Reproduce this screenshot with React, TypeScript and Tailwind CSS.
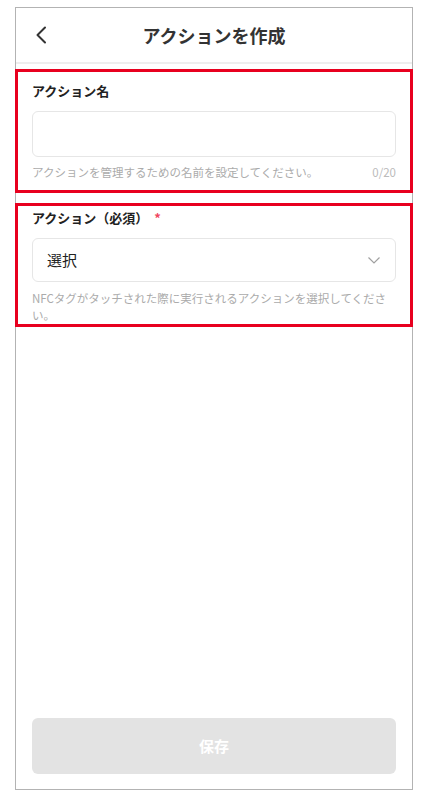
export default function App() {
  return (
    <div
      className="relative w-[425px] h-[805px] bg-white"
      style={{ fontFamily: '"Noto Sans CJK JP", "Noto Sans", sans-serif' }}
    >
      {/* Phone frame */}
      <div className="absolute left-[15px] top-[7px] w-[398px] h-[783px] border border-[#b3b3b3] flex flex-col">
        {/* Header */}
        <div className="grid grid-cols-[48px_1fr_48px] items-center h-[54px] shrink-0">
          <svg
            width="12"
            height="18"
            viewBox="0 0 12 18"
            className="ml-[19px]"
            fill="none"
            stroke="#333"
            strokeWidth="2"
            strokeLinecap="round"
            strokeLinejoin="round"
          >
            <path d="M10 1.5 L2.5 9 L10 16.5" />
          </svg>
          <h1 className="text-center text-[18px] font-bold text-[#333] leading-none">
            アクションを作成
          </h1>
          <div />
        </div>
        <div className="h-[2px] bg-[#eeeeee] shrink-0" />

        {/* Form */}
        <div className="flex-1 flex flex-col px-[16px] pt-[17px] pb-[15px]">
          <label className="text-[13px] font-bold text-[#222] leading-[20px]">
            アクション名
          </label>
          <input
            className="mt-[10px] h-[46px] w-full rounded-[6px] border border-[#e6e6e6] px-[14px] text-[14px] outline-none"
            type="text"
          />
          <div className="mt-[7px] flex justify-between text-[11.5px] leading-[17px] text-[#ababab]">
            <span>アクションを管理するための名前を設定してください。</span>
            <span className="text-[#bbbbbb]">0/20</span>
          </div>

          <label className="mt-[27px] text-[13px] font-bold text-[#222] leading-[20px]">
            アクション（必須）
            <span className="ml-[6px] text-[#f0485f]">*</span>
          </label>
          <div className="mt-[10px] h-[44px] w-full rounded-[6px] border border-[#e6e6e6] flex items-center justify-between pl-[14px] pr-[15px]">
            <span className="text-[15px] text-[#222]">選択</span>
            <svg width="12" height="7" viewBox="0 0 12 7" fill="none" stroke="#a0a0a0" strokeWidth="1.2">
              <path d="M0.5 0.5 L6 6 L11.5 0.5" />
            </svg>
          </div>
          <p className="mt-[8px] text-[11.5px] leading-[17px] text-[#ababab]">
            NFCタグがタッチされた際に実行されるアクションを選択してください。
          </p>

          <div className="flex-1" />
          <button className="h-[56px] w-full rounded-[6px] bg-[#e3e3e3] text-[15px] font-bold text-white">
            保存
          </button>
        </div>
      </div>

      {/* Annotation boxes */}
      <div className="absolute left-[15px] top-[69px] w-[398px] h-[124px] border-[3px] border-[#e8001f]" />
      <div className="absolute left-[15px] top-[203px] w-[398px] h-[124px] border-[3px] border-[#e8001f]" />
    </div>
  );
}
